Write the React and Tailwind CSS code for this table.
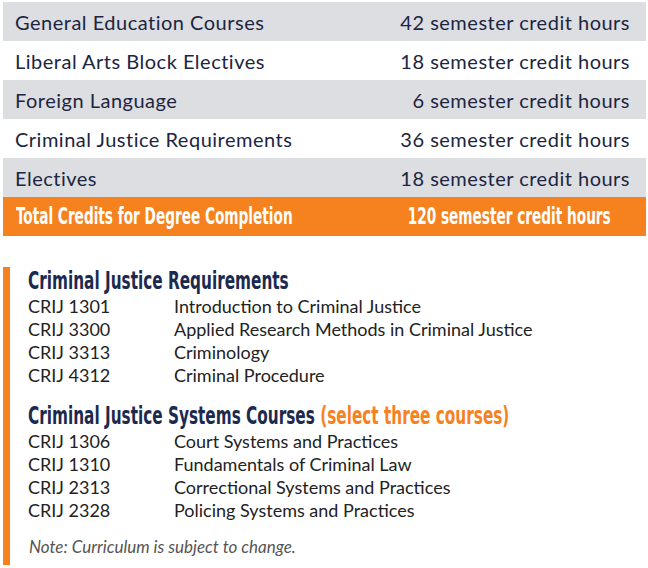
import React from "react";

const rows = [
  ["General Education Courses", "42 semester credit hours", true],
  ["Liberal Arts Block Electives", "18 semester credit hours", false],
  ["Foreign Language", "6 semester credit hours", true],
  ["Criminal Justice Requirements", "36 semester credit hours", false],
  ["Electives", "18 semester credit hours", true],
];

const req = [
  ["CRIJ 1301", "Introduction to Criminal Justice"],
  ["CRIJ 3300", "Applied Research Methods in Criminal Justice"],
  ["CRIJ 3313", "Criminology"],
  ["CRIJ 4312", "Criminal Procedure"],
];

const sys = [
  ["CRIJ 1306", "Court Systems and Practices"],
  ["CRIJ 1310", "Fundamentals of Criminal Law"],
  ["CRIJ 2313", "Correctional Systems and Practices"],
  ["CRIJ 2328", "Policing Systems and Practices"],
];

const body = { fontFamily: "Lato, 'Open Sans', sans-serif" };
const cond = { fontFamily: "'DejaVu Sans Condensed', 'DejaVu Sans', sans-serif" };

function Course({ code, title }) {
  return (
    <div className="flex h-[23px] items-center text-[18px] text-[#222222]" style={body}>
      <span className="w-[146px] shrink-0">{code}</span>
      <span>{title}</span>
    </div>
  );
}

export default function App() {
  return (
    <div className="w-[648px] h-[568px] bg-white overflow-hidden">
      <div className="ml-[3px] mr-[2px] pt-[2px]">
        {rows.map(([l, r, g]) => (
          <div
            key={l}
            className={`flex h-[39px] items-center justify-between pl-[12px] pr-[16px] text-[20px] tracking-[0.5px] text-[#1c2541] ${g ? "bg-[#dcdee2]" : "bg-white"}`}
            style={body}
          >
            <span>{l}</span>
            <span>{r}</span>
          </div>
        ))}
        <div className="flex h-[39px] items-center justify-between pl-[13px] pr-[35px] bg-[#f6821f] text-white text-[23px] font-bold whitespace-nowrap" style={cond}>
          <div className="w-[280px] flex justify-start">
            <span className="origin-left scale-x-[0.66] inline-block shrink-0">Total Credits for Degree Completion</span>
          </div>
          <div className="w-[210px] flex justify-end">
            <span className="origin-right scale-x-[0.66] inline-block shrink-0">120 semester credit hours</span>
          </div>
        </div>
      </div>

      <div className="mt-[31px] ml-[3px] h-[298px] border-l-[7px] border-[#f6821f] pl-[18px]">
        <div className="h-[28px] flex items-center text-[25px] font-bold text-[#1b2a4e] whitespace-nowrap" style={cond}>
          <span className="origin-left scale-x-[0.68] inline-block">Criminal Justice Requirements</span>
        </div>
        {req.map(([c, t]) => (
          <Course key={c} code={c} title={t} />
        ))}
        <div className="mt-[15px] h-[28px] flex items-center text-[25px] font-bold text-[#1b2a4e] whitespace-nowrap" style={cond}>
          <span className="origin-left scale-x-[0.68] inline-block">
            Criminal Justice Systems Courses <span className="text-[#f6821f]">(select three courses)</span>
          </span>
        </div>
        {sys.map(([c, t]) => (
          <Course key={c} code={c} title={t} />
        ))}
        <div className="mt-[12px] ml-[1px] text-[17px] italic text-[#555555]" style={body}>
          Note: Curriculum is subject to change.
        </div>
      </div>
    </div>
  );
}
